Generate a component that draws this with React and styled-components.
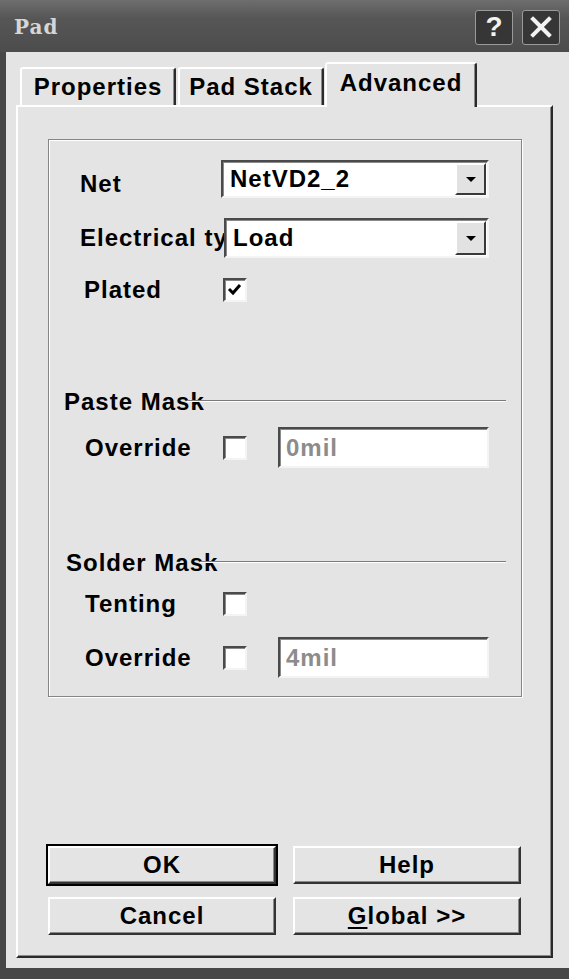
import styled, { createGlobalStyle } from "styled-components";

const GlobalStyle = createGlobalStyle`
  html, body {
    margin: 0;
    padding: 0;
    background: #4a4a4a;
  }
  * {
    box-sizing: border-box;
  }
`;

const UI_FONT = `"Liberation Sans", Arial, sans-serif`;

const App = () => {
  return (
    <>
      <GlobalStyle />
      <Window>
        <TitleBar>
          <Title>Pad</Title>
          <CaptionButtons>
            <CaptionButton>?</CaptionButton>
            <CaptionButton>
              <svg width="22" height="22" viewBox="0 0 22 22">
                <path
                  d="M3 3 L19 19 M19 3 L3 19"
                  stroke="#f2f2f2"
                  strokeWidth="4"
                  strokeLinecap="square"
                />
              </svg>
            </CaptionButton>
          </CaptionButtons>
        </TitleBar>

        <Body>
          <TabStrip>
            <Tab $w={156}>Properties</Tab>
            <Tab $w={146}>Pad Stack</Tab>
            <Tab $w={152} $active>
              Advanced
            </Tab>
          </TabStrip>

          <TabPanel>
            <GroupBox>
              <Row $mt={20} $h={38} $indent={31}>
                <Label $w={141} $down={9}>
                  Net
                </Label>
                <Combo $w={268}>
                  <ComboValue>NetVD2_2</ComboValue>
                  <DropButton>
                    <Arrow />
                  </DropButton>
                </Combo>
              </Row>

              <Row $mt={20} $h={40} $indent={31}>
                <Label $w={144}>Electrical type</Label>
                <Combo $w={265}>
                  <ComboValue>Load</ComboValue>
                  <DropButton>
                    <Arrow />
                  </DropButton>
                </Combo>
              </Row>

              <Row $mt={20} $h={24} $indent={35}>
                <Label $w={139}>Plated</Label>
                <CheckBox>
                  <svg width="16" height="14" viewBox="0 0 16 14">
                    <path
                      d="M2 6 L6 10 L13 2"
                      stroke="#000"
                      strokeWidth="3"
                      fill="none"
                    />
                  </svg>
                </CheckBox>
              </Row>

              <SectionHeading $mt={86} $indent={15}>
                <span>Paste Mask</span>
                <Rule />
              </SectionHeading>

              <Row $mt={11} $h={41} $indent={36}>
                <Label $w={138}>Override</Label>
                <CheckBox />
                <TextField>0mil</TextField>
              </Row>

              <SectionHeading $mt={81} $indent={17}>
                <span>Solder Mask</span>
                <Rule />
              </SectionHeading>

              <Row $mt={15} $h={23} $indent={36}>
                <Label $w={138}>Tenting</Label>
                <CheckBox />
              </Row>

              <Row $mt={22} $h={41} $indent={36}>
                <Label $w={138}>Override</Label>
                <CheckBox />
                <TextField>4mil</TextField>
              </Row>
            </GroupBox>

            <ButtonGrid>
              <PushButton $default>OK</PushButton>
              <PushButton>Help</PushButton>
              <PushButton>Cancel</PushButton>
              <PushButton>
                <u>G</u>lobal &gt;&gt;
              </PushButton>
            </ButtonGrid>
          </TabPanel>
        </Body>
      </Window>
    </>
  );
};

const Window = styled.div`
  width: 569px;
  height: 979px;
  display: flex;
  flex-direction: column;
  background: #474747;
  padding-bottom: 11px;
  font-family: ${UI_FONT};
`;

const TitleBar = styled.div`
  height: 52px;
  flex-shrink: 0;
  display: flex;
  align-items: center;
  justify-content: space-between;
  padding: 0 9px 2px 14px;
  background: linear-gradient(180deg, #6e6e6e 0%, #565656 35%, #4c4c4c 100%);
`;

const Title = styled.div`
  font-family: "DejaVu Serif", "Liberation Serif", serif;
  font-weight: bold;
  font-size: 20px;
  letter-spacing: 1px;
  color: #d6d6d6;
  padding-top: 4px;
`;

const CaptionButtons = styled.div`
  display: flex;
  gap: 9px;
  padding-top: 4px;
`;

const CaptionButton = styled.div`
  width: 38px;
  height: 35px;
  display: flex;
  align-items: center;
  justify-content: center;
  background: #363636;
  border: 1px solid #9a9a9a;
  border-radius: 3px;
  color: #f2f2f2;
  font-family: ${UI_FONT};
  font-weight: bold;
  font-size: 28px;
`;

const Body = styled.div`
  flex: 1;
  margin-left: 6px;
  display: flex;
  flex-direction: column;
  padding: 10px 16px 10px 10px;
  background: #e4e4e4;
`;

const TabStrip = styled.div`
  height: 43px;
  display: flex;
  align-items: flex-end;
  gap: 2px;
  padding-left: 4px;
  position: relative;
  z-index: 1;
`;

const Tab = styled.div`
  width: ${(p) => p.$w}px;
  height: ${(p) => (p.$active ? 45 : 38)}px;
  margin-bottom: ${(p) => (p.$active ? -2 : 0)}px;
  margin-left: ${(p) => (p.$active ? -1 : 0)}px;
  display: flex;
  align-items: center;
  justify-content: center;
  padding-bottom: ${(p) => (p.$active ? 6 : 0)}px;
  background: #e4e4e4;
  border-top: 2px solid #ffffff;
  border-left: 2px solid #ffffff;
  border-right: 2px solid #2a2a2a;
  border-radius: 3px 3px 0 0;
  box-shadow: inset -1px 0 0 #8a8a8a;
  font-size: 24px;
  font-weight: bold;
  letter-spacing: 1px;
  color: #000;
`;

const TabPanel = styled.div`
  flex: 1;
  display: flex;
  flex-direction: column;
  padding: 32px 0 0 30px;
  border-top: 2px solid #ffffff;
  border-left: 2px solid #ffffff;
  border-right: 2px solid #2a2a2a;
  border-bottom: 2px solid #2a2a2a;
  box-shadow: inset -1px -1px 0 #8a8a8a;
`;

const GroupBox = styled.div`
  width: 474px;
  display: flex;
  flex-direction: column;
  padding-bottom: 18px;
  border: 1px solid #858585;
  box-shadow: inset 1px 1px 0 #ffffff, 1px 1px 0 #ffffff;
`;

const Row = styled.div`
  height: ${(p) => p.$h}px;
  margin-top: ${(p) => p.$mt}px;
  padding-left: ${(p) => p.$indent}px;
  display: flex;
  align-items: center;
`;

const Label = styled.div`
  width: ${(p) => p.$w}px;
  flex-shrink: 0;
  overflow: hidden;
  white-space: nowrap;
  margin-top: ${(p) => p.$down || 0}px;
  font-size: 24px;
  font-weight: bold;
  letter-spacing: 1px;
  color: #000;
`;

const sunken = `
  background: #ffffff;
  border-top: 2px solid #4a4a4a;
  border-left: 2px solid #4a4a4a;
  border-right: 2px solid #f4f4f4;
  border-bottom: 2px solid #f4f4f4;
  box-shadow: inset 1px 1px 0 #8a8a8a;
`;

const Combo = styled.div`
  width: ${(p) => p.$w}px;
  height: 100%;
  display: flex;
  align-items: stretch;
  padding: 1px;
  ${sunken}
`;

const ComboValue = styled.div`
  flex: 1;
  display: flex;
  align-items: center;
  padding-left: 6px;
  font-size: 24px;
  font-weight: bold;
  letter-spacing: 1px;
  color: #000;
`;

const DropButton = styled.div`
  width: 31px;
  display: flex;
  align-items: center;
  justify-content: center;
  background: #e2e2e2;
  border-top: 2px solid #ffffff;
  border-left: 2px solid #ffffff;
  border-right: 2px solid #3a3a3a;
  border-bottom: 2px solid #3a3a3a;
`;

const Arrow = styled.div`
  width: 0;
  height: 0;
  border-left: 5px solid transparent;
  border-right: 5px solid transparent;
  border-top: 5px solid #000;
`;

const CheckBox = styled.div`
  width: 24px;
  height: 24px;
  flex-shrink: 0;
  display: flex;
  align-items: center;
  justify-content: center;
  ${sunken}
`;

const TextField = styled.div`
  width: 211px;
  height: 41px;
  margin-left: 31px;
  display: flex;
  align-items: center;
  padding-left: 6px;
  font-size: 24px;
  font-weight: bold;
  letter-spacing: 1px;
  color: #8c8c8c;
  ${sunken}
`;

const SectionHeading = styled.div`
  height: 28px;
  margin-top: ${(p) => p.$mt}px;
  padding-left: ${(p) => p.$indent}px;
  padding-right: 15px;
  display: flex;
  align-items: center;
  font-size: 24px;
  font-weight: bold;
  letter-spacing: 1px;
  color: #000;
  white-space: nowrap;
`;

const Rule = styled.div`
  flex: 1;
  align-self: flex-start;
  margin-top: 12px;
  margin-left: -18px;
  z-index: 1;
  border-top: 1px solid #7a7a7a;
  border-bottom: 1px solid #ffffff;
`;

const ButtonGrid = styled.div`
  margin-top: auto;
  margin-bottom: 21px;
  display: grid;
  grid-template-columns: 228px 228px;
  column-gap: 17px;
  row-gap: 13px;
`;

const PushButton = styled.div`
  height: 38px;
  display: flex;
  align-items: center;
  justify-content: center;
  background: #e4e4e4;
  border-top: 2px solid #ffffff;
  border-left: 2px solid #ffffff;
  border-right: 2px solid #333333;
  border-bottom: 2px solid #333333;
  box-shadow: ${(p) =>
    p.$default
      ? "0 0 0 2px #000, inset -1px -1px 0 #8a8a8a"
      : "inset -1px -1px 0 #8a8a8a"};
  font-size: 24px;
  font-weight: bold;
  letter-spacing: 1px;
  color: #000;

  u {
    text-decoration-thickness: 2px;
    text-underline-offset: 3px;
  }
`;

export default App;
